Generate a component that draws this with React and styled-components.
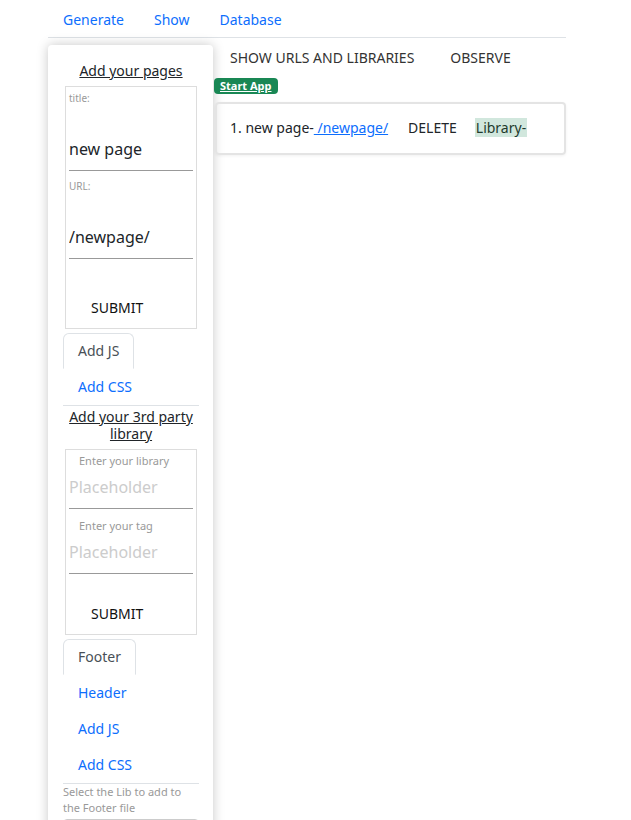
import React from 'react'
import styled, { createGlobalStyle } from 'styled-components'

const GlobalStyle = createGlobalStyle`
    body {
        margin: 0;
        font-family: 'Noto Sans', 'Open Sans', sans-serif;
        color: #212529;
        background: #fff;
    }
    * { box-sizing: border-box; }
`

const Page = styled.div`
    width: 518px;
    margin-left: 48px;
`

const TopNav = styled.nav`
    display: flex;
    border-bottom: 1px solid #dee2e6;
    height: 38px;
    align-items: center;
    padding-top: 2px;
`
const TopLink = styled.a`
    color: #0d6efd;
    font-size: 14px;
    padding: 0 15px;
    text-decoration: none;
    cursor: pointer;
`

const Layout = styled.div`
    display: flex;
    margin-top: 7px;
`

const Sidebar = styled.aside`
    width: 165px;
    flex-shrink: 0;
    height: 800px;
    padding: 0 14px 0 15px;
    border-radius: 4px;
    box-shadow: 0 0 12px rgba(0, 0, 0, 0.22);
    background: #fff;
`
const SideTitle = styled.h3`
    margin: ${p => p.$top || 0}px 0 ${p => p.$bottom || 0}px;
    font-size: 14px;
    font-weight: 400;
    line-height: 17px;
    text-align: center;
    text-decoration: underline;
    color: #212529;
`
const FormBox = styled.form`
    margin: 0 2px 0 2px;
    padding: 4px 3px 4px 3px;
    border: 1px solid #ddd;
`
const FieldLabel = styled.label`
    display: block;
    font-size: ${p => p.$small ? 10 : 11}px;
    line-height: 14px;
    color: #999;
    padding-left: ${p => p.$indent ? 10 : 0}px;
    margin-top: ${p => p.$top || 0}px;
`
const FieldInput = styled.input`
    display: block;
    width: 100%;
    border: none;
    border-bottom: 1px solid #999;
    outline: none;
    font-family: inherit;
    font-size: 16px;
    line-height: 23px;
    color: #212529;
    padding: ${p => p.$tall ? '33px 0 9px' : '8px 0 9px'};
    background: transparent;
    &::placeholder { color: #ccc; }
`
const SubmitButton = styled.button`
    display: block;
    margin-top: ${p => p.$top}px;
    padding: 6px 22px;
    border: none;
    background: transparent;
    font-family: inherit;
    font-size: 14px;
    line-height: 20px;
    color: #111;
    cursor: pointer;
`

const TabList = styled.ul`
    list-style: none;
    margin: 4px 0 0;
    padding: 0;
    border-bottom: 1px solid #dee2e6;
`
const TabItem = styled.li`
    display: block;
`
const TabLink = styled.a`
    display: inline-block;
    padding: 7px 14px;
    font-size: 14px;
    line-height: 20px;
    border: 1px solid ${p => p.$active ? '#dee2e6' : 'transparent'};
    border-bottom-color: transparent;
    border-radius: 6px 6px 0 0;
    color: ${p => p.$active ? '#495057' : '#0d6efd'};
    text-decoration: none;
    cursor: pointer;
`
const Hint = styled.p`
    margin: 0;
    font-size: 11px;
    line-height: 16px;
    color: #999;
`
const SelectBox = styled.div`
    margin-top: 3px;
    height: 30px;
    border: 1px solid #ccc;
    border-radius: 4px;
`

const Main = styled.main`
    flex: 1;
    padding-left: 1px;
`
const TabRow = styled.div`
    display: flex;
    height: 24px;
    align-items: center;
`
const MainTab = styled.span`
    padding: 0 16px;
    font-size: 14px;
    color: #333;
    margin-left: ${p => p.$gap || 0}px;
`
const Badge = styled.a`
    display: block;
    width: fit-content;
    margin-top: 9px;
    padding: 0 6px;
    height: 16px;
    line-height: 16px;
    font-size: 11px;
    font-weight: 700;
    color: #fff;
    background: #198754;
    border-radius: 4px;
    text-decoration: underline;
`
const Card = styled.div`
    margin-top: 8px;
    margin-left: 1px;
    height: 53px;
    padding: 13px 13px 0;
    line-height: 21px;
    border: 2px solid #e4e4e4;
    border-radius: 4px;
    box-shadow: 0 1px 3px rgba(0, 0, 0, 0.06);
    font-size: 14px;
    color: #212529;
`
const UrlLink = styled.a`
    color: #0d6efd;
    text-decoration: underline;
`
const DeleteText = styled.span`
    margin-left: 20px;
`
const LibraryTag = styled.span`
    margin-left: 18px;
    background: #d1e7dd;
    color: #1f3b2d;
    padding: 0 1px;
`

function App() {
    return (
        <>
            <GlobalStyle />
            <Page>
                <TopNav>
                    <TopLink>Generate</TopLink>
                    <TopLink>Show</TopLink>
                    <TopLink>Database</TopLink>
                </TopNav>
                <Layout>
                    <Sidebar>
                        <SideTitle $top={17} $bottom={7}>Add your pages</SideTitle>
                        <FormBox onSubmit={e => e.preventDefault()}>
                            <FieldLabel $small>title:</FieldLabel>
                            <FieldInput $tall defaultValue="new page" />
                            <FieldLabel $small $top={8}>URL:</FieldLabel>
                            <FieldInput $tall defaultValue="/newpage/" />
                            <SubmitButton $top={33}>SUBMIT</SubmitButton>
                        </FormBox>
                        <TabList>
                            <TabItem><TabLink $active>Add JS</TabLink></TabItem>
                            <TabItem><TabLink>Add CSS</TabLink></TabItem>
                        </TabList>
                        <SideTitle $top={2} $bottom={7}>Add your 3rd party library</SideTitle>
                        <FormBox onSubmit={e => e.preventDefault()}>
                            <FieldLabel $indent>Enter your library</FieldLabel>
                            <FieldInput placeholder="Placeholder" />
                            <FieldLabel $indent $top={10}>Enter your tag</FieldLabel>
                            <FieldInput placeholder="Placeholder" />
                            <SubmitButton $top={24}>SUBMIT</SubmitButton>
                        </FormBox>
                        <TabList>
                            <TabItem><TabLink $active>Footer</TabLink></TabItem>
                            <TabItem><TabLink>Header</TabLink></TabItem>
                            <TabItem><TabLink>Add JS</TabLink></TabItem>
                            <TabItem><TabLink>Add CSS</TabLink></TabItem>
                        </TabList>
                        <Hint>Select the Lib to add to the Footer file</Hint>
                        <SelectBox />
                    </Sidebar>
                    <Main>
                        <TabRow>
                            <MainTab>SHOW URLS AND LIBRARIES</MainTab>
                            <MainTab $gap={4}>OBSERVE</MainTab>
                        </TabRow>
                        <Badge>Start App</Badge>
                        <Card>
                            1. new page-<UrlLink> /newpage/</UrlLink>
                            <DeleteText>DELETE</DeleteText>
                            <LibraryTag>Library-</LibraryTag>
                        </Card>
                    </Main>
                </Layout>
            </Page>
        </>
    )
}

export default App
